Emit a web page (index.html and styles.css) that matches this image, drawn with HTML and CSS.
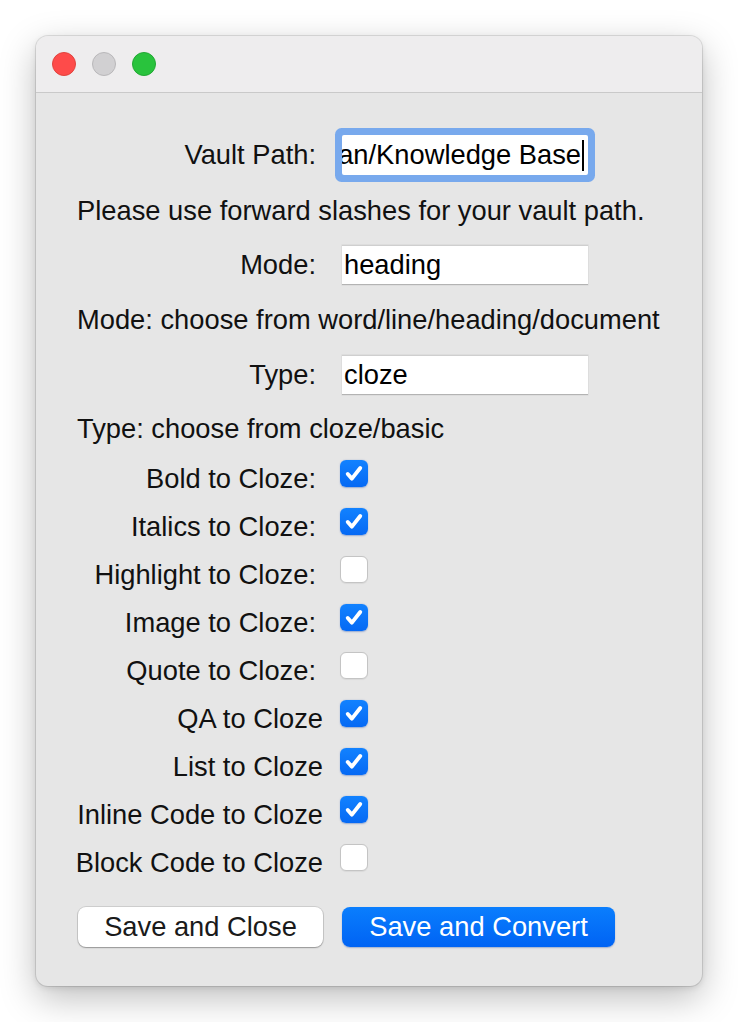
FILE: index.html
```html
<!DOCTYPE html>
<html>
<head>
<meta charset="utf-8">
<link rel="stylesheet" href="styles.css">
</head>
<body>
<div class="window">
  <div class="titlebar">
    <span class="light red"></span>
    <span class="light gray"></span>
    <span class="light green"></span>
  </div>
  <div class="content">
    <div class="form">
      <div class="lbl colon">Vault Path:</div>
      <div class="entry focus"><span class="path">ian/Knowledge Base</span><span class="caret"></span></div>

      <div class="note">Please use forward slashes for your vault path.</div>

      <div class="lbl colon">Mode:</div>
      <div class="entry"><span>heading</span></div>

      <div class="note">Mode: choose from word/line/heading/document</div>

      <div class="lbl colon">Type:</div>
      <div class="entry"><span>cloze</span></div>

      <div class="note">Type: choose from cloze/basic</div>

      <div class="lbl colon">Bold to Cloze:</div>
      <div class="check on"><svg viewBox="0 0 28 28"><path d="M7.5 14.5 L11.8 19.3 L20.5 8.3"/></svg></div>

      <div class="lbl colon">Italics to Cloze:</div>
      <div class="check on"><svg viewBox="0 0 28 28"><path d="M7.5 14.5 L11.8 19.3 L20.5 8.3"/></svg></div>

      <div class="lbl colon">Highlight to Cloze:</div>
      <div class="check"></div>

      <div class="lbl colon">Image to Cloze:</div>
      <div class="check on"><svg viewBox="0 0 28 28"><path d="M7.5 14.5 L11.8 19.3 L20.5 8.3"/></svg></div>

      <div class="lbl colon">Quote to Cloze:</div>
      <div class="check"></div>

      <div class="lbl">QA to Cloze</div>
      <div class="check on"><svg viewBox="0 0 28 28"><path d="M7.5 14.5 L11.8 19.3 L20.5 8.3"/></svg></div>

      <div class="lbl">List to Cloze</div>
      <div class="check on"><svg viewBox="0 0 28 28"><path d="M7.5 14.5 L11.8 19.3 L20.5 8.3"/></svg></div>

      <div class="lbl">Inline Code to Cloze</div>
      <div class="check on"><svg viewBox="0 0 28 28"><path d="M7.5 14.5 L11.8 19.3 L20.5 8.3"/></svg></div>

      <div class="lbl">Block Code to Cloze</div>
      <div class="check"></div>

      <button class="btn plain">Save and Close</button>
      <button class="btn primary">Save and Convert</button>
    </div>
  </div>
</div>
</body>
</html>
```

FILE: styles.css
```css
* { box-sizing: border-box; }

html, body {
  margin: 0;
  padding: 0;
  background: #ffffff;
}

body {
  font-family: "Liberation Sans", Arial, sans-serif;
  font-size: 27.3px;
  color: #111111;
  padding: 36px;
}

.window {
  width: 666px;
  height: 950px;
  border-radius: 12px;
  background: #e6e6e6;
  box-shadow: 0 0 0 1px rgba(0,0,0,0.10), 0 12px 36px rgba(0,0,0,0.26), 0 2px 6px rgba(0,0,0,0.10);
  overflow: hidden;
}

.titlebar {
  height: 57px;
  background: #eeedee;
  border-bottom: 1px solid #c9c9c9;
  display: flex;
  align-items: center;
  gap: 16px;
  padding-left: 16px;
}

.light {
  width: 24px;
  height: 24px;
  border-radius: 50%;
  display: block;
}
.light.red { background: #fe4b4a; border: 1px solid #e0443e; }
.light.gray { background: #d1d0d2; border: 1px solid #b9b8ba; }
.light.green { background: #29c33d; border: 1px solid #22a834; }

.content {
  padding: 33px 0 0 41px;
}

.form {
  display: grid;
  grid-template-columns: 246px 270px;
  column-gap: 17px;
  grid-template-rows: 57px 55px 54px 55px 55px 53px repeat(9, 48px) 80px;
  align-items: center;
}

.lbl {
  justify-self: end;
  white-space: nowrap;
  line-height: 30px;
}
.lbl.colon { padding-right: 7px; }

.note {
  grid-column: 1 / -1;
  justify-self: start;
  white-space: nowrap;
  line-height: 30px;
}

.entry {
  width: 246px;
  height: 40px;
  margin-left: 2px;
  background: #ffffff;
  border-top: 1px solid #cfcfcf;
  border-bottom: 1px solid #b3b3b3;
  box-shadow: 0 0 0 0.5px #d4d4d4;
  display: flex;
  align-items: center;
  padding-left: 2px;
  font-size: 27.3px;
  color: #000;
  overflow: hidden;
  white-space: nowrap;
}

.entry.focus {
  border-radius: 2px;
  border: none;
  box-shadow: 0 0 0 7px #78a9ed;
  justify-content: flex-end;
  padding-left: 0;
  padding-right: 4px;
  overflow: hidden;
}

.entry.focus .path {
  display: block;
  white-space: nowrap;
  flex-shrink: 0;
}

.caret {
  display: block;
  flex-shrink: 0;
  width: 2px;
  height: 31px;
  background: #000;
  margin-left: 1px;
  margin-top: 2px;
}

.check {
  width: 28px;
  height: 27px;
  border-radius: 6px;
  background: #ffffff;
  border: 1px solid #c4c4c4;
  margin-bottom: 11px;
  box-shadow: 0 0.5px 1px rgba(0,0,0,0.06);
}

.check.on {
  background: linear-gradient(#1282ff, #0569f4);
  border: none;
  box-shadow: 0 0.5px 1.5px rgba(0,60,170,0.35);
}

.check svg {
  display: block;
  width: 28px;
  height: 27px;
}
.check svg path {
  fill: none;
  stroke: #ffffff;
  stroke-width: 4;
  stroke-linecap: round;
  stroke-linejoin: round;
}

.btn {
  font-family: "Liberation Sans", Arial, sans-serif;
  font-size: 27.3px;
  height: 40px;
  border-radius: 8px;
  padding: 0;
  cursor: default;
}

.btn.plain {
  width: 245px;
  margin-left: 1px;
  background: #ffffff;
  color: #1a1a1a;
  border: none;
  box-shadow: 0 0 0 1px rgba(0,0,0,0.10), 0 1px 1.5px rgba(0,0,0,0.28);
}

.btn.primary {
  width: 273px;
  margin-left: 2px;
  color: #ffffff;
  border: none;
  background: linear-gradient(#0a7efd, #0063f4);
  box-shadow: 0 1px 1.5px rgba(0,50,150,0.3);
}
```
